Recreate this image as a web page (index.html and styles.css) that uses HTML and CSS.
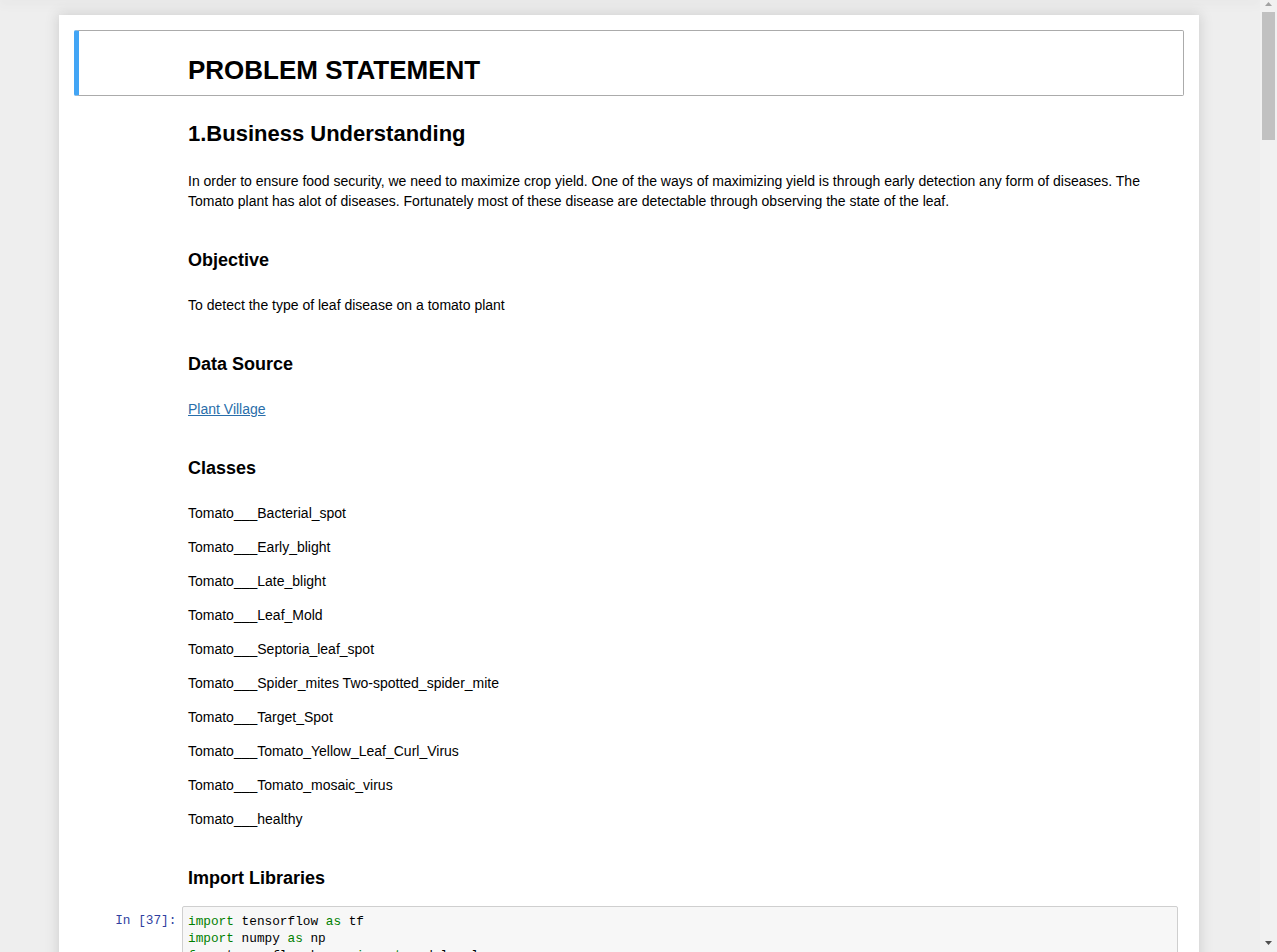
FILE: index.html
```html
<!DOCTYPE html>
<html lang="en">
<head>
<meta charset="utf-8">
<title>Tomato Leaf Disease - Notebook</title>
<link rel="stylesheet" href="styles.css">
</head>
<body>
<div class="app">
  <div class="viewport">
    <div class="topbar"></div>
    <div class="notebook">
      <div class="container">
        <div class="cell text selected">
          <div class="prompt"></div>
          <div class="render"><h1>PROBLEM STATEMENT</h1></div>
        </div>
        <div class="cell text">
          <div class="prompt"></div>
          <div class="render"><h2>1.Business Understanding</h2></div>
        </div>
        <div class="cell text">
          <div class="prompt"></div>
          <div class="render"><p>In order to ensure food security, we need to maximize crop yield. One of the ways of maximizing yield is through early detection any form of diseases. The Tomato plant has alot of diseases. Fortunately most of these disease are detectable through observing the state of the leaf.</p></div>
        </div>
        <div class="cell text">
          <div class="prompt"></div>
          <div class="render"><h3>Objective</h3></div>
        </div>
        <div class="cell text">
          <div class="prompt"></div>
          <div class="render"><p>To detect the type of leaf disease on a tomato plant</p></div>
        </div>
        <div class="cell text">
          <div class="prompt"></div>
          <div class="render"><h3>Data Source</h3></div>
        </div>
        <div class="cell text">
          <div class="prompt"></div>
          <div class="render"><p><a href="#">Plant Village</a></p></div>
        </div>
        <div class="cell text">
          <div class="prompt"></div>
          <div class="render"><h3>Classes</h3></div>
        </div>
        <div class="cell text">
          <div class="prompt"></div>
          <div class="render">
            <p>Tomato___Bacterial_spot</p>
            <p>Tomato___Early_blight</p>
            <p>Tomato___Late_blight</p>
            <p>Tomato___Leaf_Mold</p>
            <p>Tomato___Septoria_leaf_spot</p>
            <p>Tomato___Spider_mites Two-spotted_spider_mite</p>
            <p>Tomato___Target_Spot</p>
            <p>Tomato___Tomato_Yellow_Leaf_Curl_Virus</p>
            <p>Tomato___Tomato_mosaic_virus</p>
            <p>Tomato___healthy</p>
          </div>
        </div>
        <div class="cell text">
          <div class="prompt"></div>
          <div class="render"><h3>Import Libraries</h3></div>
        </div>
        <div class="cell code">
          <div class="prompt in">In&nbsp;[37]:</div>
          <div class="input-area">
<pre><span class="kw">import</span> tensorflow <span class="kw">as</span> tf
<span class="kw">import</span> numpy <span class="kw">as</span> np
<span class="kw">from</span> tensorflow.keras <span class="kw">import</span> models, layers</pre>
          </div>
        </div>
      </div>
    </div>
  </div>
  <div class="scrollbar">
    <div class="sb-btn">
      <svg width="7" height="4" viewBox="0 0 7 4"><polygon points="0,4 3.5,0 7,4" fill="#a3a3a3"/></svg>
    </div>
    <div class="sb-track">
      <div class="sb-thumb"></div>
    </div>
    <div class="sb-btn bottom">
      <svg width="7" height="4" viewBox="0 0 7 4"><polygon points="0,0 7,0 3.5,4" fill="#505050"/></svg>
    </div>
  </div>
</div>
</body>
</html>
```
FILE: styles.css
```css
html, body {
  margin: 0;
  padding: 0;
  height: 100%;
  overflow: hidden;
}

body {
  font-family: "Liberation Sans", Arial, Helvetica, sans-serif;
  font-size: 14px;
  line-height: 20px;
  color: #000;
  background: #eeeeee;
}

.app {
  display: flex;
  height: 952px;
  width: 100%;
}

.viewport {
  flex: 1;
  height: 952px;
  overflow: hidden;
  background: #eeeeee;
  display: flex;
  flex-direction: column;
}

.topbar {
  height: 0;
  flex: none;
  box-shadow: 0 0 12px 1px rgba(87, 87, 87, 0.2);
  position: relative;
  z-index: 2;
}

.notebook {
  padding-top: 15px;
  padding-right: 2px;
  flex: 1;
}

.container {
  width: 1140px;
  box-sizing: border-box;
  margin: 0 auto;
  padding: 15px;
  min-height: 1200px;
  background: #fff;
  box-shadow: 0 0 12px 1px rgba(87, 87, 87, 0.2);
}

.cell {
  display: flex;
  align-items: flex-start;
  border: 1px solid transparent;
  border-radius: 2px;
  padding: 5px;
}

.cell.selected {
  border-color: #ababab;
  border-left: 5px solid #42a5f5;
  padding-left: 1px;
}

.prompt {
  flex: none;
  width: 102px;
  box-sizing: border-box;
  padding: 5.6px;
  text-align: right;
  font-family: "Liberation Mono", "DejaVu Sans Mono", monospace;
  font-size: 12.75px;
  line-height: 17px;
  color: #303f9f;
  white-space: nowrap;
}

.render {
  flex: 1;
  min-width: 0;
  padding: 7px 7px 7px 6px;
}

.render h1,
.render h2,
.render h3 {
  font-weight: bold;
  line-height: 1;
  margin: 0;
}

.render h1 {
  font-size: 26px;
  margin-top: 14px;
}

.render h2 {
  font-size: 22px;
  margin-top: 14px;
}

.render h3 {
  font-size: 18px;
  margin-top: 14px;
}

.render p {
  margin: 14px 0 0 0;
}

.render p:first-child {
  margin-top: 0;
}

.render a {
  color: #296eaa;
  text-decoration: underline;
}

.input-area {
  flex: 1;
  min-width: 0;
  border: 1px solid #cfcfcf;
  border-radius: 2px;
  background: #f7f7f7;
  padding: 6px 0 5px 0;
}

.input-area pre {
  margin: 0;
  padding: 0 4px 0 5px;
  font-family: "Liberation Mono", "DejaVu Sans Mono", monospace;
  font-size: 12.75px;
  line-height: 17px;
  color: #000;
}

.kw {
  color: #008000;
}

.scrollbar {
  flex: none;
  width: 17px;
  height: 952px;
  background: #f1f1f1;
  display: flex;
  flex-direction: column;
}

.sb-btn {
  flex: none;
  height: 12px;
  display: flex;
  justify-content: center;
  align-items: flex-start;
  padding-top: 2px;
  box-sizing: border-box;
}

.sb-btn svg {
  display: block;
}

.sb-btn.bottom {
  height: 17px;
  padding-top: 6px;
}

.sb-track {
  flex: 1;
  display: flex;
  flex-direction: column;
  align-items: center;
}

.sb-thumb {
  width: 13px;
  height: 128px;
  background: #c1c1c1;
}
```
